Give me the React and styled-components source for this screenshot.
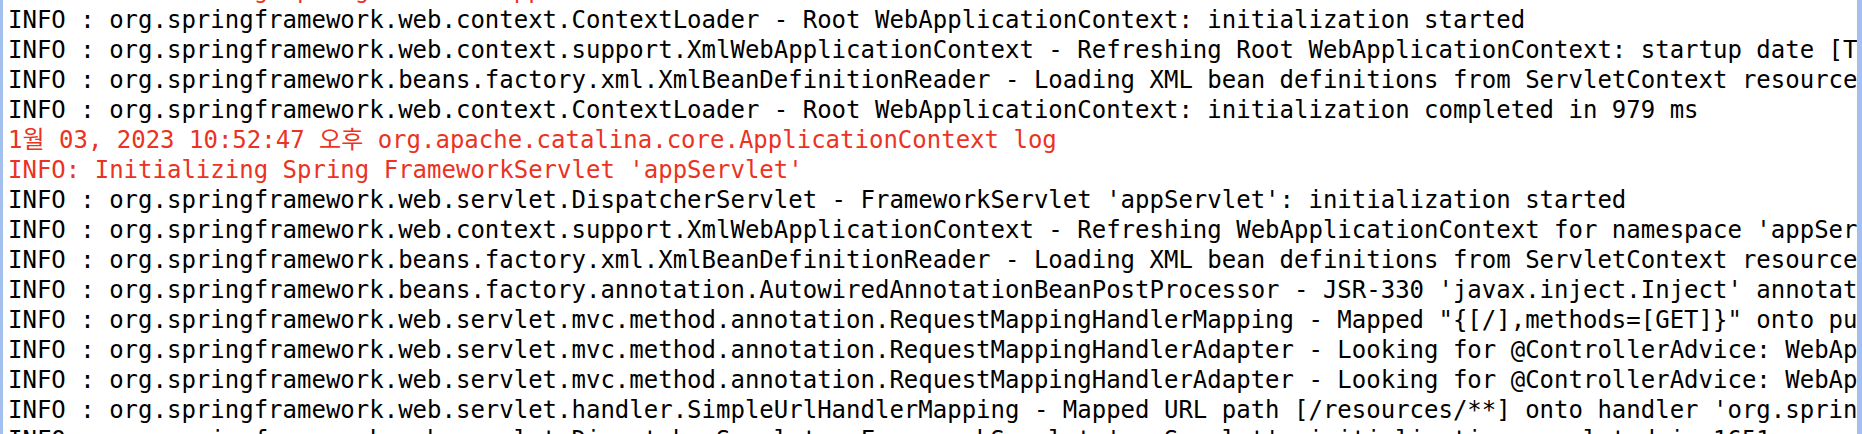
import React from 'react';
import styled, { createGlobalStyle } from 'styled-components';

const GlobalStyle = createGlobalStyle`
	html, body {
		margin: 0;
		padding: 0;
		background: #ffffff;
		overflow: hidden;
	}
`;

const StyledConsole = styled.div`
	display: flex;
	width: 1862px;
	height: 434px;
	overflow: hidden;
	background: #ffffff;
`;

const StyledEdge = styled.div`
	flex: 0 0 ${({ $width }) => $width}px;
	background: #a4c0ee;
`;

const StyledPane = styled.div`
	flex: 1;
	min-width: 0;
	overflow: hidden;
	padding-left: 5px;
`;

const StyledLines = styled.div`
	margin-top: -25px;
	font-family: 'DejaVu Sans Mono', 'Noto Sans CJK KR', monospace;
	font-size: 24px;
	line-height: 30px;
`;

const StyledLine = styled.div`
	white-space: pre;
	color: ${({ $error }) => ($error ? '#ea3323' : '#000000')};
`;

const lines = [
	{ error: true, text: 'INFO: Initializing Spring root WebApplicationContext' },
	{ text: 'INFO : org.springframework.web.context.ContextLoader - Root WebApplicationContext: initialization started' },
	{
		text: 'INFO : org.springframework.web.context.support.XmlWebApplicationContext - Refreshing Root WebApplicationContext: startup date [Tue Jan 03 22:52:46 KST 2023]; root of context hierarchy',
	},
	{
		text: 'INFO : org.springframework.beans.factory.xml.XmlBeanDefinitionReader - Loading XML bean definitions from ServletContext resource [/WEB-INF/spring/root-context.xml]',
	},
	{ text: 'INFO : org.springframework.web.context.ContextLoader - Root WebApplicationContext: initialization completed in 979 ms' },
	{ error: true, text: '1월 03, 2023 10:52:47 오후 org.apache.catalina.core.ApplicationContext log' },
	{ error: true, text: "INFO: Initializing Spring FrameworkServlet 'appServlet'" },
	{ text: "INFO : org.springframework.web.servlet.DispatcherServlet - FrameworkServlet 'appServlet': initialization started" },
	{
		text: "INFO : org.springframework.web.context.support.XmlWebApplicationContext - Refreshing WebApplicationContext for namespace 'appServlet-servlet': startup date [Tue Jan 03 22:52:47 KST 2023]",
	},
	{
		text: 'INFO : org.springframework.beans.factory.xml.XmlBeanDefinitionReader - Loading XML bean definitions from ServletContext resource [/WEB-INF/spring/appServlet/servlet-context.xml]',
	},
	{
		text: "INFO : org.springframework.beans.factory.annotation.AutowiredAnnotationBeanPostProcessor - JSR-330 'javax.inject.Inject' annotation found and supported for autowiring",
	},
	{
		text: 'INFO : org.springframework.web.servlet.mvc.method.annotation.RequestMappingHandlerMapping - Mapped "{[/],methods=[GET]}" onto public java.lang.String com.example.HomeController.home()',
	},
	{
		text: "INFO : org.springframework.web.servlet.mvc.method.annotation.RequestMappingHandlerAdapter - Looking for @ControllerAdvice: WebApplicationContext for namespace 'appServlet-servlet'",
	},
	{
		text: 'INFO : org.springframework.web.servlet.mvc.method.annotation.RequestMappingHandlerAdapter - Looking for @ControllerAdvice: WebApplicationContext for namespace',
	},
	{
		text: "INFO : org.springframework.web.servlet.handler.SimpleUrlHandlerMapping - Mapped URL path [/resources/**] onto handler 'org.springframework.web.servlet.resource.ResourceHttpRequestHandler#0'",
	},
	{ text: "INFO : org.springframework.web.servlet.DispatcherServlet - FrameworkServlet 'appServlet': initialization completed in 1651 ms" },
];

const App = () => (
	<>
		<GlobalStyle />
		<StyledConsole>
			<StyledEdge $width={3} />
			<StyledPane>
				<StyledLines>
					{lines.map(({ text, error }, index) => (
						<StyledLine key={index} $error={error}>
							{text}
						</StyledLine>
					))}
				</StyledLines>
			</StyledPane>
			<StyledEdge $width={5} />
		</StyledConsole>
	</>
);

export default App;
